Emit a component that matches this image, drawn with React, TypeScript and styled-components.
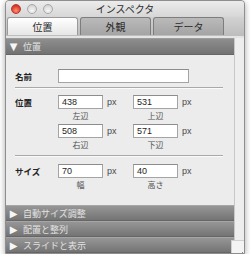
import styled, { createGlobalStyle } from "styled-components";

const GlobalStyle = createGlobalStyle`
  html, body {
    margin: 0;
    padding: 0;
    background: #ffffff;
  }
  body {
    font-family: "Noto Sans CJK JP", "Liberation Sans", sans-serif;
  }
`;

const Window = styled.div`
  margin-left: 5px;
  width: 238px;
  height: 252px;
  border: 1px solid #8e8e8e;
  border-radius: 4px 4px 0 0;
  box-shadow: 0 2px 6px rgba(0, 0, 0, 0.35);
  background: #c2c2c2;
  display: flex;
  flex-direction: column;
  position: relative;
  overflow: hidden;
`;

const TitleBar = styled.div`
  height: 16px;
  flex-shrink: 0;
  display: flex;
  align-items: center;
  position: relative;
  background: linear-gradient(#ececec, #d6d6d6);
`;

const Lights = styled.div`
  display: flex;
  gap: 6px;
  padding-left: 5px;
`;

const Light = styled.span<{ $red?: boolean }>`
  width: 10px;
  height: 10px;
  border-radius: 50%;
  box-sizing: border-box;
  border: 1px solid ${(p) => (p.$red ? "#b23a2e" : "#a8a8a8")};
  background: ${(p) =>
    p.$red
      ? "radial-gradient(circle at 50% 70%, #ff8f7a, #e0402c 60%, #b5281a)"
      : "radial-gradient(circle at 50% 70%, #f7f7f7, #dcdcdc 60%, #c4c4c4)"};
`;

const Title = styled.div`
  position: absolute;
  left: 0;
  right: 0;
  text-align: center;
  font-size: 10px;
  line-height: 16px;
  color: #2c2c2c;
`;

const TabBar = styled.div`
  height: 21px;
  flex-shrink: 0;
  display: flex;
  align-items: flex-end;
  gap: 2px;
  padding: 0 0 1px 1px;
  box-sizing: border-box;
  background: linear-gradient(#d2d2d2, #bdbdbd);
  border-bottom: 2px solid #e4e4e4;
`;

const Tab = styled.div<{ $active?: boolean }>`
  width: 71px;
  height: 18px;
  box-sizing: border-box;
  display: flex;
  align-items: center;
  justify-content: center;
  font-size: 10px;
  color: #2a2a2a;
  border: 1px solid ${(p) => (p.$active ? "#9a9a9a" : "#7d7d7d")};
  border-bottom: none;
  border-radius: 3px 3px 0 0;
  background: ${(p) =>
    p.$active
      ? "linear-gradient(#ffffff, #e6e6e6)"
      : "linear-gradient(#bababa, #a4a4a4)"};
`;

const Body = styled.div`
  flex: 1;
  display: flex;
`;

const Panel = styled.div`
  width: 228px;
  display: flex;
  flex-direction: column;
`;

const Strip = styled.div`
  flex: 1;
  background: #eeeeee;
  border-left: 1px solid #c8c8c8;
`;

const Header = styled.div<{ $open?: boolean }>`
  height: ${(p) => (p.$open ? 17 : 16)}px;
  flex-shrink: 0;
  display: flex;
  align-items: center;
  gap: 4px;
  padding-left: 2px;
  box-sizing: border-box;
  font-size: 9px;
  color: #e2e2e2;
  background: ${(p) =>
    p.$open
      ? "linear-gradient(#8e8e8e, #727272)"
      : "linear-gradient(#969696, #747474)"};
  border-top: 1px solid ${(p) => (p.$open ? "#9c9c9c" : "#a6a6a6")};
  border-bottom: 1px solid #666666;
`;

const Arrow = styled.span`
  font-size: 10px;
  width: 11px;
  text-align: center;
  color: #f6f6f6;
  font-family: "DejaVu Sans", sans-serif;
`;

const Content = styled.div`
  flex: 1;
  background: #ececec;
  padding: 14px 0 0 9px;
  box-sizing: border-box;
`;

const Row = styled.div`
  display: flex;
  align-items: flex-start;
`;

const Label = styled.div`
  width: 43px;
  height: 14px;
  line-height: 14px;
  font-size: 8.5px;
  font-weight: 700;
  color: #222;
`;

const NameInput = styled.div`
  width: 131px;
  height: 14px;
  box-sizing: border-box;
  background: #fff;
  border: 1px solid #a4a4a4;
  border-top-color: #8c8c8c;
`;

const Separator = styled.div<{ $top: number; $bottom: number }>`
  width: 208px;
  height: 1px;
  background: #a9a9a9;
  box-shadow: 0 1px 0 #fafafa;
  margin: ${(p) => p.$top}px 0 ${(p) => p.$bottom}px;
`;

const Fields = styled.div`
  display: grid;
  grid-template-columns: 75px 60px;
  row-gap: 2px;
`;

const Field = styled.div`
  display: flex;
  flex-direction: column;
  align-items: flex-start;
`;

const InputLine = styled.div`
  display: flex;
  align-items: center;
  gap: 4px;
`;

const NumberBox = styled.div`
  width: 45px;
  height: 14px;
  box-sizing: border-box;
  padding-left: 3px;
  background: #fff;
  border: 1px solid #a4a4a4;
  border-top-color: #8c8c8c;
  font-family: "Liberation Sans", sans-serif;
  font-size: 9px;
  line-height: 12px;
  color: #1e1e1e;
`;

const Unit = styled.span`
  font-family: "Liberation Sans", sans-serif;
  font-size: 9px;
  color: #4a4a4a;
`;

const Caption = styled.div`
  width: 45px;
  text-align: center;
  font-size: 8px;
  line-height: 13px;
  color: #505050;
`;

const Grip = styled.div`
  position: absolute;
  right: 0;
  bottom: 0;
  width: 12px;
  height: 12px;
  background: #f4f4f4;
  border-left: 1px solid #d0d0d0;
  border-top: 1px solid #d0d0d0;
`;

type Item = { value: string; caption: string };

const NumField = ({ value, caption }: Item) => (
  <Field>
    <InputLine>
      <NumberBox>{value}</NumberBox>
      <Unit>px</Unit>
    </InputLine>
    <Caption>{caption}</Caption>
  </Field>
);

const position: Item[] = [
  { value: "438", caption: "左辺" },
  { value: "531", caption: "上辺" },
  { value: "508", caption: "右辺" },
  { value: "571", caption: "下辺" },
];

const size: Item[] = [
  { value: "70", caption: "幅" },
  { value: "40", caption: "高さ" },
];

const App = () => {
  return (
    <>
      <GlobalStyle />
      <Window>
        <TitleBar>
          <Lights>
            <Light $red />
            <Light />
            <Light />
          </Lights>
          <Title>インスペクタ</Title>
        </TitleBar>
        <TabBar>
          <Tab $active>位置</Tab>
          <Tab>外観</Tab>
          <Tab>データ</Tab>
        </TabBar>
        <Body>
          <Panel>
            <Header $open>
              <Arrow>▼</Arrow>位置
            </Header>
            <Content>
              <Row>
                <Label>名前</Label>
                <NameInput />
              </Row>
              <Separator $top={4} $bottom={7} />
              <Row>
                <Label>位置</Label>
                <Fields>
                  {position.map((f) => (
                    <NumField key={f.caption} {...f} />
                  ))}
                </Fields>
              </Row>
              <Separator $top={4} $bottom={8} />
              <Row>
                <Label>サイズ</Label>
                <Fields>
                  {size.map((f) => (
                    <NumField key={f.caption} {...f} />
                  ))}
                </Fields>
              </Row>
            </Content>
            <Header>
              <Arrow>▶</Arrow>自動サイズ調整
            </Header>
            <Header>
              <Arrow>▶</Arrow>配置と整列
            </Header>
            <Header>
              <Arrow>▶</Arrow>スライドと表示
            </Header>
          </Panel>
          <Strip />
        </Body>
        <Grip>
          <svg width="12" height="12" viewBox="0 0 12 12">
            <path d="M11 4 L4 11 M11 7 L7 11 M11 10 L10 11" stroke="#8a8a8a" strokeWidth="1" />
          </svg>
        </Grip>
      </Window>
    </>
  );
};

export default App;
